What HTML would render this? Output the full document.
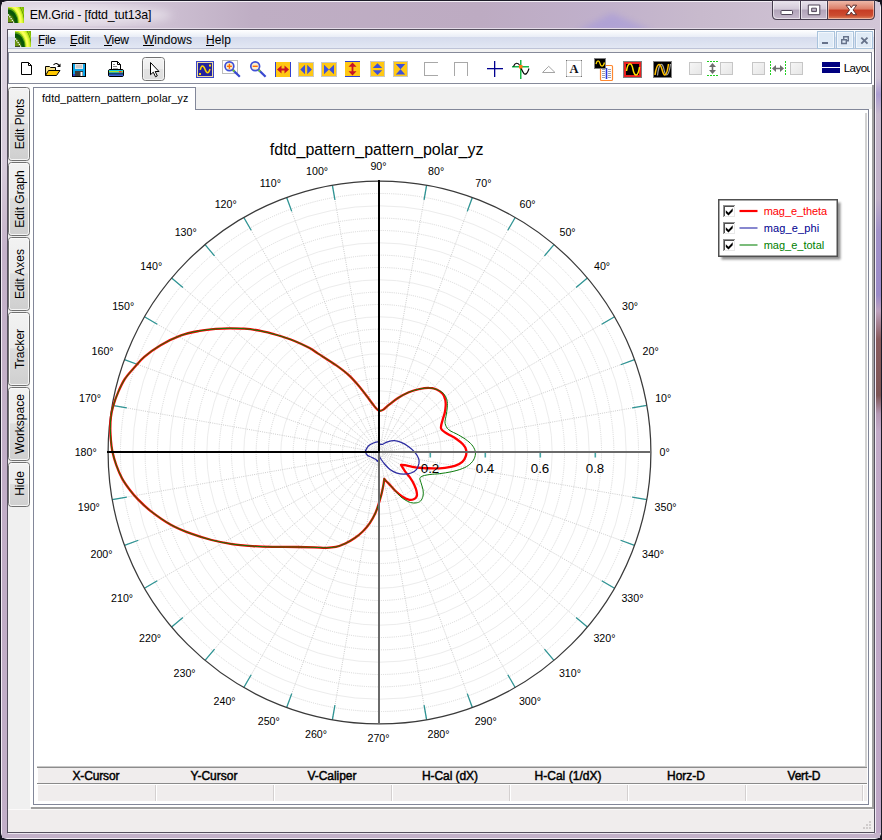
<!DOCTYPE html>
<html><head><meta charset="utf-8"><title>EM.Grid - [fdtd_tut13a]</title>
<style>
html,body{margin:0;padding:0;background:#14141e;overflow:hidden}
svg{display:block;font-family:"Liberation Sans",sans-serif}
.ce{shape-rendering:crispEdges}
</style></head><body>
<svg width="882" height="840" viewBox="0 0 882 840">
<defs>
<linearGradient id="gTitle" x1="0" x2="1" y1="0" y2="0">
<stop offset="0" stop-color="#e0d8e4"/><stop offset="0.07" stop-color="#dcd3e0"/><stop offset="0.17" stop-color="#cfc2d4"/><stop offset="0.285" stop-color="#bfaec4"/><stop offset="0.545" stop-color="#bdabc2"/><stop offset="0.68" stop-color="#c0b0cb"/><stop offset="0.795" stop-color="#c8bacd"/><stop offset="1" stop-color="#d2c6d7"/>
</linearGradient>
<linearGradient id="gSide" x1="0" x2="0" y1="0" y2="1">
<stop offset="0" stop-color="#e0d8e4"/><stop offset="0.2" stop-color="#d6cbda"/><stop offset="0.3" stop-color="#c4b2c9"/><stop offset="0.7" stop-color="#c0acc6"/><stop offset="1" stop-color="#c2afc8"/>
</linearGradient>
<linearGradient id="gSideR" x1="0" x2="0" y1="0" y2="1">
<stop offset="0" stop-color="#d8cedc"/><stop offset="0.06" stop-color="#cfc3d6"/><stop offset="0.08" stop-color="#ab9cd0"/><stop offset="0.105" stop-color="#c6b8cc"/><stop offset="0.21" stop-color="#c0b0c8"/><stop offset="0.25" stop-color="#a292c8"/><stop offset="0.33" stop-color="#9a8ac8"/><stop offset="0.35" stop-color="#bea2be"/><stop offset="0.385" stop-color="#8a5c5e"/><stop offset="0.455" stop-color="#7e5656"/><stop offset="0.478" stop-color="#b498b4"/><stop offset="0.5" stop-color="#c2aac8"/><stop offset="1" stop-color="#bea6c6"/>
</linearGradient>
<linearGradient id="gMenu" x1="0" x2="0" y1="0" y2="1">
<stop offset="0" stop-color="#ffffff"/><stop offset="0.38" stop-color="#e9edf6"/><stop offset="0.39" stop-color="#d5dbed"/><stop offset="1" stop-color="#e2e7f3"/>
</linearGradient>
<linearGradient id="gBtn" x1="0" x2="0" y1="0" y2="1">
<stop offset="0" stop-color="#f2f2f2"/><stop offset="0.48" stop-color="#ebebeb"/><stop offset="0.5" stop-color="#dddddd"/><stop offset="1" stop-color="#cfcfcf"/>
</linearGradient>
<linearGradient id="gBtnSel" x1="0" x2="0" y1="0" y2="1">
<stop offset="0" stop-color="#f4f4f4"/><stop offset="0.5" stop-color="#ececec"/><stop offset="0.52" stop-color="#e2e2e2"/><stop offset="1" stop-color="#dedede"/>
</linearGradient>
<linearGradient id="gCap" x1="0" x2="0" y1="0" y2="1">
<stop offset="0" stop-color="#e9e3ec"/><stop offset="0.45" stop-color="#d3c9d8"/><stop offset="0.5" stop-color="#b2a4ba"/><stop offset="1" stop-color="#c6b9cc"/>
</linearGradient>
<linearGradient id="gClose" x1="0" x2="0" y1="0" y2="1">
<stop offset="0" stop-color="#eeb8a8"/><stop offset="0.45" stop-color="#dc7c66"/><stop offset="0.5" stop-color="#c63c24"/><stop offset="0.8" stop-color="#cc4c30"/><stop offset="1" stop-color="#dc8460"/>
</linearGradient>
<linearGradient id="gDis" x1="0" x2="1" y1="0" y2="1">
<stop offset="0" stop-color="#f6f6f6"/><stop offset="1" stop-color="#e6e6e6"/>
</linearGradient>
<clipPath id="icoClip"><rect x="0" y="0" width="16" height="16"/></clipPath>
<g id="appico" clip-path="url(#icoClip)">
<rect x="0" y="0" width="16" height="16" fill="#7cbc00"/>
<ellipse cx="0" cy="16" rx="17.400" ry="25.200" fill="#a4d410"/>
<ellipse cx="0" cy="16" rx="16.600" ry="24" fill="#5c9000"/>
<ellipse cx="0" cy="16" rx="16" ry="23.100" fill="#bce81c"/>
<ellipse cx="0" cy="16" rx="14.800" ry="21.400" fill="#e4fa3c"/>
<ellipse cx="0" cy="16" rx="13.600" ry="19.600" fill="#fbff5c"/>
<ellipse cx="0" cy="16" rx="11.600" ry="16.800" fill="#d4f030"/>
<ellipse cx="0" cy="16" rx="10.600" ry="15.200" fill="#62ac14"/>
<ellipse cx="0" cy="16" rx="9.800" ry="13.600" fill="#0a560a"/>
<ellipse cx="0" cy="16" rx="7.600" ry="10.600" fill="#125e08"/>
<ellipse cx="0" cy="16" rx="6.400" ry="9.100" fill="#4a7a08"/>
<ellipse cx="0" cy="16" rx="4.600" ry="6.400" fill="#6a9410"/>
<path d="M0.200 7.400 L6 15.600" stroke="#fff" stroke-width="1.2" stroke-dasharray="1.4 0.8"/>
<rect x="0" y="15" width="5" height="1" fill="#3c4a2c"/>
</g>
<filter id="blur1"><feGaussianBlur stdDeviation="0.9"/></filter>
<filter id="glow"><feGaussianBlur stdDeviation="4"/></filter>
<filter id="glow2" x="-30%" y="-50%" width="160%" height="200%"><feGaussianBlur stdDeviation="3"/></filter>
<clipPath id="titleClip"><rect x="2" y="2" width="878" height="27"/></clipPath>
<clipPath id="tbClip"><rect x="9" y="53" width="861" height="30"/></clipPath>
</defs>

<rect x="0" y="0" width="882" height="840" rx="7" ry="7" fill="#1b1b26"/>
<rect x="1" y="1" width="880" height="838" rx="6" ry="6" fill="#f3eef5"/>
<rect x="2" y="2" width="878" height="836" rx="5" ry="5" fill="url(#gSide)"/>
<rect x="2" y="2" width="878" height="28" fill="url(#gTitle)" />
<rect x="875" y="30" width="6" height="803" fill="url(#gSideR)" />
<rect x="875" y="30" width="1" height="803" fill="#efe9f3" />
<rect x="1" y="30" width="1" height="803" fill="#f1ecf3" />
<rect x="2" y="833" width="878" height="5" fill="#c3b1c9" />
<rect x="8" y="833" width="866" height="1" fill="#ece6ef" />
<g clip-path="url(#titleClip)"><path d="M575 32 L612 13 L655 32 Z" fill="#9c90e0" opacity="0.45" filter="url(#glow2)"/></g>
<rect x="8" y="28" width="866" height="1" fill="#e4dce8" />
<ellipse cx="92" cy="15" rx="80" ry="9" fill="#fff" opacity="0.45" filter="url(#glow)"/>
<rect x="7" y="29" width="868" height="804" fill="#55505e" class="ce"/>
<rect x="8" y="30" width="866" height="802" fill="#f0f0f0" class="ce"/>
<use href="#appico" x="8" y="7"/>
<text x="29.7" y="18.9" font-size="12.4" fill="#000" text-anchor="start" font-weight="normal" textLength="121.8" lengthAdjust="spacing" >EM.Grid - [fdtd_tut13a]</text>
<path d="M772 0 V15 Q772 20 777 20 H870 Q875 20 875 15 V0 Z" fill="#463c4e"/>
<path d="M773 1 V15 Q773 19 777 19 H800 V1 Z" fill="url(#gCap)"/>
<path d="M773.500 1 V15 Q773.500 18.500 777 18.500 H799.500 V1" fill="none" stroke="#fff" stroke-opacity="0.55"/>
<rect x="801" y="1" width="26" height="18" fill="url(#gCap)"/>
<path d="M801.500 1 V18.500 H826.500 V1" fill="none" stroke="#fff" stroke-opacity="0.55"/>
<path d="M828 1 V19 H870 Q874 19 874 15 V1 Z" fill="url(#gClose)"/>
<path d="M828.500 1 V18.500 H870 Q873.500 18.500 873.500 15 V1" fill="none" stroke="#ffd8cc" stroke-opacity="0.6"/>
<rect x="781" y="10.500" width="11.500" height="4" rx="0.8" fill="#fff" stroke="#4e4456" stroke-width="1"/>
<path d="M808.300 5 H819.800 V14.700 H808.300 Z M811.700 8.200 V11.600 H816.400 V8.200 Z" fill="#fff" fill-rule="evenodd" stroke="#4e4456" stroke-width="1"/>
<path d="M846 5.200 h3.600 l1.700 2.600 l1.700 -2.600 h3.600 l-3.500 4.700 l3.500 4.800 h-3.600 l-1.700 -2.600 l-1.700 2.600 h-3.600 l3.500 -4.800 z" fill="#fff" stroke="#5c3030" stroke-width="1"/>
<rect x="8" y="30" width="866" height="18" fill="url(#gMenu)" class="ce"/>
<rect x="8" y="48" width="866" height="1" fill="#bec3d7" />
<rect x="8" y="49" width="866" height="3" fill="#f2f2f2" class="ce"/>
<use href="#appico" x="15" y="31"/>
<text x="38" y="43.5" font-size="12" fill="#000" text-anchor="start" font-weight="normal" textLength="18" lengthAdjust="spacing" >File</text>
<text x="70" y="43.5" font-size="12" fill="#000" text-anchor="start" font-weight="normal" textLength="20" lengthAdjust="spacing" >Edit</text>
<text x="104" y="43.5" font-size="12" fill="#000" text-anchor="start" font-weight="normal" textLength="25" lengthAdjust="spacing" >View</text>
<text x="143" y="43.5" font-size="12" fill="#000" text-anchor="start" font-weight="normal" textLength="49" lengthAdjust="spacing" >Windows</text>
<text x="206" y="43.5" font-size="12" fill="#000" text-anchor="start" font-weight="normal" textLength="25" lengthAdjust="spacing" >Help</text>
<rect x="38" y="45" width="6" height="1" fill="#000" />
<rect x="70" y="45" width="6" height="1" fill="#000" />
<rect x="104" y="45" width="8" height="1" fill="#000" />
<rect x="143" y="45" width="11" height="1" fill="#000" />
<rect x="206" y="45" width="8" height="1" fill="#000" />
<rect x="817.5" y="31.5" width="17" height="17" fill="#dfeaf6" stroke="#a9c3dc" class="ce"/>
<rect x="818.5" y="32.5" width="15" height="15" fill="none" stroke="#f2f7fc" class="ce"/>
<rect x="836.5" y="31.5" width="17" height="17" fill="#dfeaf6" stroke="#a9c3dc" class="ce"/>
<rect x="837.5" y="32.5" width="15" height="15" fill="none" stroke="#f2f7fc" class="ce"/>
<rect x="855.5" y="31.5" width="17" height="17" fill="#dfeaf6" stroke="#a9c3dc" class="ce"/>
<rect x="856.5" y="32.5" width="15" height="15" fill="none" stroke="#f2f7fc" class="ce"/>
<rect x="822" y="42" width="6" height="2" fill="#66728a" class="ce"/>
<path d="M841.700 39.700 h4.600 v3.800 h-4.600 z M843.700 39 v-2.200 h4.600 v4 h-1.600" fill="none" stroke="#66728a" stroke-width="1.4"/>
<path d="M861.300 37.600 l6.200 6 M867.500 37.600 l-6.200 6" stroke="#66728a" stroke-width="1.9"/>
<rect x="8" y="52" width="864" height="32" fill="#868a9a" class="ce"/>
<rect x="9" y="53" width="862" height="30" fill="#ffffff" class="ce"/>
<rect x="872" y="52" width="2" height="35" fill="#ffffff" class="ce"/>
<rect x="8" y="84" width="866" height="3" fill="#ffffff" class="ce"/>
<g clip-path="url(#tbClip)">
<path d="M21.5 62.5 H28.5 L31.5 65.5 V74.5 H21.5 Z" fill="#fff" stroke="#000" stroke-width="1"/>
<path d="M28.5 62.5 V65.5 H31.5" fill="none" stroke="#000" stroke-width="1"/>
<path d="M45.5 75.500 V66.5 H49.5 L50.5 67.5 H55.5 V70" fill="#f4e08c" stroke="#000" stroke-width="1"/>
<path d="M45.500 75.5 L48.5 70.5 H60 L56.5 75.5 Z" fill="#ffc800" stroke="#000" stroke-width="1" stroke-linejoin="round"/>
<path d="M53.5 65 Q56.5 61.500 59.500 66" fill="none" stroke="#000" stroke-width="1.1"/>
<path d="M60.500 63.500 V67 H57 Z" fill="#000"/>
<rect x="72.5" y="63.5" width="13" height="13" fill="#0aa4e8" stroke="#000" stroke-width="1"/>
<rect x="75" y="64" width="8" height="5" fill="#e4e4e4" />
<rect x="76" y="65" width="6" height="3" fill="#c8c8c8" />
<rect x="75" y="71" width="8" height="5" fill="#3c3c3c" />
<rect x="80.5" y="72" width="2" height="4" fill="#ffffff" />
<rect x="73" y="74" width="2" height="2" fill="#3040d0" />
<path d="M111.5 69.500 V61.500 H117.5 L120.500 64.500 V69.5 Z" fill="#fff" stroke="#000" stroke-width="1"/>
<path d="M117.5 61.500 V64.500 H120.5" fill="none" stroke="#000" stroke-width="1"/>
<rect x="113" y="64" width="2" height="1" fill="#888" />
<rect x="113" y="66" width="4" height="1" fill="#888" />
<rect x="113" y="68" width="5" height="1" fill="#aaa" />
<rect x="108.5" y="69.5" width="15" height="7" rx="1.5" fill="#1c4fc0" stroke="#000" stroke-width="1"/>
<rect x="109" y="70" width="14" height="1" fill="#10c8e0" />
<rect x="109" y="71" width="14" height="1.5" fill="#a8e030" />
<rect x="109" y="72.5" width="14" height="1" fill="#10c0d8" />
<rect x="109" y="73.5" width="14" height="1" fill="#101010" />
<rect x="109" y="74.5" width="14" height="1.5" fill="#3c64d8" />
<rect x="119" y="71" width="2.5" height="1.5" fill="#ff3020" />
<rect x="142.5" y="57.5" width="22" height="23" rx="3" fill="url(#gBtnSel)" stroke="#727272"/>
<rect x="143.5" y="58.5" width="20" height="21" rx="2" fill="none" stroke="#fbfbfb" stroke-opacity="0.7"/>
<path d="M150.5 62.500 V74.700 L153.300 72.200 L155.500 76.800 L157.300 75.900 L155.200 71.500 H159 Z" fill="#fff" stroke="#000" stroke-width="1" stroke-linejoin="miter"/>
<rect x="196" y="61" width="18" height="17" fill="#3c48c8" class="ce"/>
<rect x="197" y="62" width="16" height="15" fill="#ecdca0" class="ce"/>
<rect x="198" y="63" width="14" height="13" fill="#2424a0" class="ce"/>
<path d="M200.300 69.800 C201.300 65 203.300 64.800 205 69.300 S208.600 74 210 69" fill="none" stroke="#ffd800" stroke-width="1.5"/>
<rect x="209" y="64.5" width="2" height="2" fill="#ffd800" />
<rect x="199" y="73" width="2" height="2" fill="#ffd800" />
<rect x="222.5" y="60.5" width="15" height="13" fill="#fff" stroke="#bdbdbd" class="ce"/>
<line x1="232.8" y1="69.900" x2="239.8" y2="76.800" stroke="#3848d0" stroke-width="2.2"/>
<line x1="232.6" y1="69.700" x2="234.4" y2="71.500" stroke="#70c830" stroke-width="1.9"/>
<circle cx="229.4" cy="66.3" r="4.4" fill="#fbeecb" stroke="#4050d8" stroke-width="1.7"/>
<rect x="226.9" y="65.6" width="5" height="1.4" fill="#ff6a00"/>
<rect x="228.70000000000002" y="63.800" width="1.4" height="5" fill="#ff6a00"/>
<line x1="258.59999999999997" y1="69.900" x2="265.59999999999997" y2="76.800" stroke="#3848d0" stroke-width="2.2"/>
<line x1="258.4" y1="69.700" x2="260.2" y2="71.500" stroke="#70c830" stroke-width="1.9"/>
<circle cx="255.2" cy="66.3" r="4.4" fill="#fbeecb" stroke="#4050d8" stroke-width="1.7"/>
<rect x="252.7" y="65.6" width="5" height="1.4" fill="#ff6a00"/>
<rect x="275" y="62" width="16" height="15" fill="#ffc814" class="ce"/>
<rect x="275" y="62" width="1" height="15" fill="#3040d0" class="ce"/>
<rect x="290" y="62" width="1" height="15" fill="#3040d0" class="ce"/>
<path d="M277 69.500 L281.500 65.500 V68.600 H284.500 V65.500 L289 69.500 L284.500 73.500 V70.400 H281.500 V73.500 Z" fill="#c81424"/>
<rect x="298.5" y="62.5" width="15" height="14" fill="#ffc814" stroke="#c8c8c8" class="ce"/>
<path d="M300.300 69.500 L305 64.800 V74.200 Z M311.900 69.500 L307.200 64.800 V74.200 Z" fill="#3c50dc"/>
<rect x="321.5" y="62.5" width="15" height="14" fill="#ffc814" stroke="#c8c8c8" class="ce"/>
<path d="M324 64.800 L329 69.500 L324 74.200 Z M334 64.800 L329 69.500 L334 74.200 Z" fill="#3c50dc"/>
<rect x="345" y="61" width="15" height="16" fill="#ffc814" class="ce"/>
<rect x="345" y="61" width="15" height="1" fill="#3040d0" class="ce"/>
<rect x="345" y="76" width="15" height="1" fill="#3040d0" class="ce"/>
<path d="M352.500 62.500 L356.500 66.800 H353.400 V71.200 H356.500 L352.500 75.500 L348.500 71.200 H351.600 V66.800 H348.500 Z" fill="#c81424"/>
<rect x="370.5" y="61.5" width="14" height="15" fill="#ffc814" stroke="#c8c8c8" class="ce"/>
<path d="M377.500 63.300 L382.200 68 H372.800 Z M377.500 75 L382.200 70.300 H372.800 Z" fill="#3c50dc"/>
<rect x="393.5" y="61.5" width="14" height="15" fill="#ffc814" stroke="#c8c8c8" class="ce"/>
<path d="M395.800 64 H405.200 L400.500 69.200 Z M395.800 74.500 H405.200 L400.500 69.200 Z" fill="#3c50dc"/>
<path d="M437.500 62.500 H424.500 V75.500 H437.500" fill="none" stroke="#a8a8a8" class="ce"/>
<path d="M454.500 75.500 V62.500 H467.500 V75.500" fill="none" stroke="#a8a8a8" class="ce"/>
<rect x="487" y="68" width="16" height="1.3" fill="#000090" />
<rect x="494" y="61" width="1.3" height="16" fill="#000090" />
<rect x="520" y="60" width="1.5" height="19" fill="#18b848" />
<rect x="512" y="66" width="17" height="1.5" fill="#18b848" />
<path d="M513.500 66.500 C515 62.500 518 62 520 66 C522.500 71 524 76 526.500 73.500 C528 72 528.500 70 529 68.500" fill="none" stroke="#000" stroke-width="1.2"/>
<rect x="519" y="65" width="3.5" height="3.5" fill="#ff7a10" />
<path d="M542.500 72.500 L548.700 66.300 L555 72.500 Z" fill="none" stroke="#a4a4a4" stroke-width="1"/>
<rect x="566.5" y="60.5" width="15" height="16" fill="#fff" stroke="#c4c4c4" class="ce"/>
<rect x="566" y="60" width="1" height="1" fill="#707070" />
<rect x="581" y="60" width="1" height="1" fill="#707070" />
<rect x="566" y="76" width="1" height="1" fill="#707070" />
<rect x="581" y="76" width="1" height="1" fill="#707070" />
<text x="574" y="72.800" font-family="Liberation Serif, serif" font-weight="bold" font-size="12.5" text-anchor="middle" fill="#101018">A</text>
<rect x="600.5" y="65.500" width="12" height="15" rx="1" fill="#fff" stroke="#ff8830" stroke-width="1.2"/>
<rect x="602" y="69" width="3" height="1" fill="#9aa0b0" />
<rect x="608" y="69" width="3" height="1" fill="#9aa0b0" />
<rect x="602" y="71" width="3" height="1" fill="#9aa0b0" />
<rect x="608" y="71" width="3" height="1" fill="#9aa0b0" />
<rect x="602" y="73" width="3" height="1" fill="#9aa0b0" />
<rect x="608" y="73" width="3" height="1" fill="#9aa0b0" />
<rect x="602" y="75" width="3" height="1" fill="#9aa0b0" />
<rect x="608" y="75" width="3" height="1" fill="#9aa0b0" />
<rect x="602" y="77" width="3" height="1" fill="#9aa0b0" />
<rect x="608" y="77" width="3" height="1" fill="#9aa0b0" />
<rect x="605.7" y="68" width="1.6" height="11" fill="#2838e0" />
<rect x="594.5" y="58.5" width="11" height="10" fill="#000" stroke="#808080" class="ce"/>
<path d="M596 64 C597 60 599 60 600 63.500 S603 67.500 604.500 62.500" fill="none" stroke="#ffd800" stroke-width="1.3"/>
<rect x="623.5" y="61.5" width="18" height="16" fill="#000" stroke="#808080" class="ce"/>
<rect x="625" y="63" width="15" height="13" fill="none" stroke="#e82020" stroke-width="1.2" class="ce"/>
<path d="M626.500 71 C628 61.500 631.500 62 633 69.500 S638 77.500 639.500 67" fill="none" stroke="#ffe000" stroke-width="1.5"/>
<rect x="653.5" y="61.5" width="18" height="16" fill="#000" stroke="#808080" class="ce"/>
<path d="M657.500 75.500 C659 62 662.500 62 664 69.500 S668.500 78 670.500 64" fill="none" stroke="#a0a0a0" stroke-width="1.2"/>
<path d="M655 75 C657 62 660 62 662 69.500 S666.500 78 668.500 64" fill="none" stroke="#ffc000" stroke-width="1.5"/>
<rect x="689.5" y="62.5" width="12" height="12" fill="url(#gDis)" stroke="#c6c6c6" class="ce"/>
<rect x="720.5" y="62.5" width="12" height="12" fill="url(#gDis)" stroke="#c6c6c6" class="ce"/>
<rect x="752.5" y="62.5" width="12" height="12" fill="url(#gDis)" stroke="#c6c6c6" class="ce"/>
<rect x="790.5" y="62.5" width="12" height="12" fill="url(#gDis)" stroke="#c6c6c6" class="ce"/>
<path d="M707 61.500 H718 M707 75.500 H718" stroke="#20d020" stroke-width="1" stroke-dasharray="2 1" class="ce"/>
<path d="M712.500 63 L716 67 H713.300 V70 H716 L712.500 74 L709 70 H711.700 V67 H709 Z" fill="#6e6e6e"/>
<path d="M770.500 61 V75 M785.500 61 V75" stroke="#20d020" stroke-width="1" stroke-dasharray="2 1" class="ce"/>
<path d="M772 68.500 L776 65 V67.700 H780 V65 L784 68.500 L780 72 V69.300 H776 V72 Z" fill="#6e6e6e"/>
<rect x="822" y="62" width="18" height="5" fill="#000080" class="ce"/>
<rect x="822" y="68" width="18" height="5" fill="#000080" class="ce"/>
<text x="843.7" y="71.8" font-size="11.5" fill="#000" text-anchor="start" font-weight="normal" textLength="32" lengthAdjust="spacing" >Layout</text>
</g>
<rect x="8" y="87" width="22" height="722" fill="#f0f0f0" class="ce"/>
<rect x="30" y="84" width="842" height="723" fill="#ffffff" class="ce"/>
<rect x="196" y="87" width="676" height="22" fill="#f0f0f0" class="ce"/>
<rect x="872" y="85" width="2" height="724" fill="#a0a0a0" class="ce"/>
<rect x="31" y="807" width="843" height="2" fill="#a0a0a0" class="ce"/>
<rect x="33" y="87" width="1" height="718" fill="#828799" />
<rect x="33" y="87" width="163" height="1" fill="#828799" />
<rect x="195" y="87" width="1" height="23" fill="#828799" />
<rect x="195" y="109" width="674" height="1" fill="#828799" />
<rect x="868" y="109" width="1" height="696" fill="#828799" />
<rect x="33" y="804" width="836" height="1" fill="#828799" />
<text x="42" y="101.5" font-size="10.67" fill="#000" text-anchor="start" font-weight="normal" textLength="146.3" lengthAdjust="spacing" >fdtd_pattern_pattern_polar_yz</text>
<rect x="865" y="113" width="2" height="653" fill="#d2d2d2" class="ce"/>
<rect x="8.5" y="87.5" width="21" height="73" rx="3" fill="url(#gBtn)" stroke="#707070"/>
<rect x="9.5" y="88.5" width="19" height="71" rx="2" fill="none" stroke="#fcfcfc" stroke-opacity="0.85"/>
<text transform="translate(24,124.0) rotate(-90)" font-size="12" text-anchor="middle" fill="#000">Edit Plots</text>
<rect x="8.5" y="162.5" width="21" height="73" rx="3" fill="url(#gBtn)" stroke="#707070"/>
<rect x="9.5" y="163.5" width="19" height="71" rx="2" fill="none" stroke="#fcfcfc" stroke-opacity="0.85"/>
<text transform="translate(24,199.0) rotate(-90)" font-size="12" text-anchor="middle" fill="#000">Edit Graph</text>
<rect x="8.5" y="237.5" width="21" height="73" rx="3" fill="url(#gBtn)" stroke="#707070"/>
<rect x="9.5" y="238.5" width="19" height="71" rx="2" fill="none" stroke="#fcfcfc" stroke-opacity="0.85"/>
<text transform="translate(24,274.0) rotate(-90)" font-size="12" text-anchor="middle" fill="#000">Edit Axes</text>
<rect x="8.5" y="312.5" width="21" height="73" rx="3" fill="url(#gBtn)" stroke="#707070"/>
<rect x="9.5" y="313.5" width="19" height="71" rx="2" fill="none" stroke="#fcfcfc" stroke-opacity="0.85"/>
<text transform="translate(24,349.0) rotate(-90)" font-size="12" text-anchor="middle" fill="#000">Tracker</text>
<rect x="8.5" y="387.5" width="21" height="73" rx="3" fill="url(#gBtn)" stroke="#707070"/>
<rect x="9.5" y="388.5" width="19" height="71" rx="2" fill="none" stroke="#fcfcfc" stroke-opacity="0.85"/>
<text transform="translate(24,424.0) rotate(-90)" font-size="12" text-anchor="middle" fill="#000">Workspace</text>
<rect x="8.5" y="462.5" width="21" height="44" rx="3" fill="url(#gBtn)" stroke="#707070"/>
<rect x="9.5" y="463.5" width="19" height="42" rx="2" fill="none" stroke="#fcfcfc" stroke-opacity="0.85"/>
<text transform="translate(24,483.5) rotate(-90)" font-size="12" text-anchor="middle" fill="#000">Hide</text>
<rect x="37" y="766" width="830" height="1" fill="#c8c8c8" />
<rect x="37" y="767" width="830" height="1" fill="#8c8c8c" />
<rect x="38" y="768" width="829" height="15" fill="#f0eded" class="ce"/>
<rect x="37" y="783" width="830" height="1" fill="#8a8a8a" />
<rect x="38" y="785" width="829" height="16" fill="#f0eded" class="ce"/>
<text x="96" y="779.5" font-size="12" fill="#000" text-anchor="middle" font-weight="normal" textLength="47" lengthAdjust="spacing" stroke="#000" stroke-width="0.45">X-Cursor</text>
<rect x="155" y="785" width="1" height="16" fill="#d4d0d0" />
<rect x="156" y="785" width="1" height="16" fill="#ffffff" />
<text x="214" y="779.5" font-size="12" fill="#000" text-anchor="middle" font-weight="normal" textLength="47" lengthAdjust="spacing" stroke="#000" stroke-width="0.45">Y-Cursor</text>
<rect x="273" y="785" width="1" height="16" fill="#d4d0d0" />
<rect x="274" y="785" width="1" height="16" fill="#ffffff" />
<text x="332" y="779.5" font-size="12" fill="#000" text-anchor="middle" font-weight="normal" textLength="49" lengthAdjust="spacing" stroke="#000" stroke-width="0.45">V-Caliper</text>
<rect x="391" y="785" width="1" height="16" fill="#d4d0d0" />
<rect x="392" y="785" width="1" height="16" fill="#ffffff" />
<text x="450" y="779.5" font-size="12" fill="#000" text-anchor="middle" font-weight="normal" textLength="56" lengthAdjust="spacing" stroke="#000" stroke-width="0.45">H-Cal (dX)</text>
<rect x="509" y="785" width="1" height="16" fill="#d4d0d0" />
<rect x="510" y="785" width="1" height="16" fill="#ffffff" />
<text x="568" y="779.5" font-size="12" fill="#000" text-anchor="middle" font-weight="normal" textLength="67" lengthAdjust="spacing" stroke="#000" stroke-width="0.45">H-Cal (1/dX)</text>
<rect x="627" y="785" width="1" height="16" fill="#d4d0d0" />
<rect x="628" y="785" width="1" height="16" fill="#ffffff" />
<text x="686" y="779.5" font-size="12" fill="#000" text-anchor="middle" font-weight="normal" textLength="38" lengthAdjust="spacing" stroke="#000" stroke-width="0.45">Horz-D</text>
<rect x="745" y="785" width="1" height="16" fill="#d4d0d0" />
<rect x="746" y="785" width="1" height="16" fill="#ffffff" />
<text x="804" y="779.5" font-size="12" fill="#000" text-anchor="middle" font-weight="normal" textLength="33" lengthAdjust="spacing" stroke="#000" stroke-width="0.45">Vert-D</text>
<rect x="862" y="785" width="1" height="16" fill="#d4d0d0" />
<rect x="863" y="785" width="1" height="16" fill="#ffffff" />
<rect x="8" y="809" width="866" height="23" fill="#f0eded" class="ce"/>
<rect x="8" y="809" width="866" height="1" fill="#fbfafa" />
<rect x="869" y="827" width="2" height="2" fill="#d0cccc" class="ce"/>
<rect x="866" y="827" width="2" height="2" fill="#d0cccc" class="ce"/>
<rect x="863" y="827" width="2" height="2" fill="#d0cccc" class="ce"/>
<rect x="869" y="824" width="2" height="2" fill="#d0cccc" class="ce"/>
<rect x="866" y="824" width="2" height="2" fill="#d0cccc" class="ce"/>
<rect x="869" y="821" width="2" height="2" fill="#d0cccc" class="ce"/>
<g fill="none">
<circle cx="379.5" cy="452.5" r="12.34" stroke="#d6d6d6" stroke-width="1" stroke-dasharray="1 1.15"/>
<circle cx="379.5" cy="452.5" r="24.67" stroke="#ececec" stroke-width="1"/>
<circle cx="379.5" cy="452.5" r="37.01" stroke="#d6d6d6" stroke-width="1" stroke-dasharray="1 1.15"/>
<circle cx="379.5" cy="452.5" r="49.34" stroke="#d6d6d6" stroke-width="1" stroke-dasharray="1 1.15"/>
<circle cx="379.5" cy="452.5" r="61.68" stroke="#ececec" stroke-width="1"/>
<circle cx="379.5" cy="452.5" r="74.01" stroke="#d6d6d6" stroke-width="1" stroke-dasharray="1 1.15"/>
<circle cx="379.5" cy="452.5" r="86.34" stroke="#d6d6d6" stroke-width="1" stroke-dasharray="1 1.15"/>
<circle cx="379.5" cy="452.5" r="98.68" stroke="#ececec" stroke-width="1"/>
<circle cx="379.5" cy="452.5" r="111.02" stroke="#d6d6d6" stroke-width="1" stroke-dasharray="1 1.15"/>
<circle cx="379.5" cy="452.5" r="123.35" stroke="#d6d6d6" stroke-width="1" stroke-dasharray="1 1.15"/>
<circle cx="379.5" cy="452.5" r="135.69" stroke="#ececec" stroke-width="1"/>
<circle cx="379.5" cy="452.5" r="148.02" stroke="#d6d6d6" stroke-width="1" stroke-dasharray="1 1.15"/>
<circle cx="379.5" cy="452.5" r="160.36" stroke="#d6d6d6" stroke-width="1" stroke-dasharray="1 1.15"/>
<circle cx="379.5" cy="452.5" r="172.69" stroke="#ececec" stroke-width="1"/>
<circle cx="379.5" cy="452.5" r="185.03" stroke="#d6d6d6" stroke-width="1" stroke-dasharray="1 1.15"/>
<circle cx="379.5" cy="452.5" r="197.36" stroke="#d6d6d6" stroke-width="1" stroke-dasharray="1 1.15"/>
<circle cx="379.5" cy="452.5" r="209.70" stroke="#ececec" stroke-width="1"/>
<circle cx="379.5" cy="452.5" r="222.03" stroke="#d6d6d6" stroke-width="1" stroke-dasharray="1 1.15"/>
<circle cx="379.5" cy="452.5" r="234.37" stroke="#d6d6d6" stroke-width="1" stroke-dasharray="1 1.15"/>
<circle cx="379.5" cy="452.5" r="246.70" stroke="#ececec" stroke-width="1"/>
<circle cx="379.5" cy="452.5" r="259.04" stroke="#d6d6d6" stroke-width="1" stroke-dasharray="1 1.15"/>
<line x1="382.45" y1="451.98" x2="646.78" y2="405.37" stroke="#cecece" stroke-width="1" stroke-dasharray="1 1.2" stroke-dashoffset="1.50"/>
<line x1="382.32" y1="451.47" x2="634.53" y2="359.68" stroke="#cecece" stroke-width="1" stroke-dasharray="1 1.2" stroke-dashoffset="0.80"/>
<line x1="382.10" y1="451.00" x2="614.54" y2="316.80" stroke="#cecece" stroke-width="1" stroke-dasharray="1 1.2" stroke-dashoffset="0.10"/>
<line x1="381.80" y1="450.57" x2="587.40" y2="278.05" stroke="#cecece" stroke-width="1" stroke-dasharray="1 1.2" stroke-dashoffset="1.60"/>
<line x1="381.43" y1="450.20" x2="553.95" y2="244.60" stroke="#cecece" stroke-width="1" stroke-dasharray="1 1.2" stroke-dashoffset="0.90"/>
<line x1="381.00" y1="449.90" x2="515.20" y2="217.46" stroke="#cecece" stroke-width="1" stroke-dasharray="1 1.2" stroke-dashoffset="0.20"/>
<line x1="380.53" y1="449.68" x2="472.32" y2="197.47" stroke="#cecece" stroke-width="1" stroke-dasharray="1 1.2" stroke-dashoffset="1.70"/>
<line x1="380.02" y1="449.55" x2="426.63" y2="185.22" stroke="#cecece" stroke-width="1" stroke-dasharray="1 1.2" stroke-dashoffset="1.00"/>
<line x1="378.98" y1="449.55" x2="332.37" y2="185.22" stroke="#cecece" stroke-width="1" stroke-dasharray="1 1.2" stroke-dashoffset="1.80"/>
<line x1="378.47" y1="449.68" x2="286.68" y2="197.47" stroke="#cecece" stroke-width="1" stroke-dasharray="1 1.2" stroke-dashoffset="1.10"/>
<line x1="378.00" y1="449.90" x2="243.80" y2="217.46" stroke="#cecece" stroke-width="1" stroke-dasharray="1 1.2" stroke-dashoffset="0.40"/>
<line x1="377.57" y1="450.20" x2="205.05" y2="244.60" stroke="#cecece" stroke-width="1" stroke-dasharray="1 1.2" stroke-dashoffset="1.90"/>
<line x1="377.20" y1="450.57" x2="171.60" y2="278.05" stroke="#cecece" stroke-width="1" stroke-dasharray="1 1.2" stroke-dashoffset="1.20"/>
<line x1="376.90" y1="451.00" x2="144.46" y2="316.80" stroke="#cecece" stroke-width="1" stroke-dasharray="1 1.2" stroke-dashoffset="0.50"/>
<line x1="376.68" y1="451.47" x2="124.47" y2="359.68" stroke="#cecece" stroke-width="1" stroke-dasharray="1 1.2" stroke-dashoffset="2.00"/>
<line x1="376.55" y1="451.98" x2="112.22" y2="405.37" stroke="#cecece" stroke-width="1" stroke-dasharray="1 1.2" stroke-dashoffset="1.30"/>
<line x1="376.55" y1="453.02" x2="112.22" y2="499.63" stroke="#cecece" stroke-width="1" stroke-dasharray="1 1.2" stroke-dashoffset="2.10"/>
<line x1="376.68" y1="453.53" x2="124.47" y2="545.32" stroke="#cecece" stroke-width="1" stroke-dasharray="1 1.2" stroke-dashoffset="1.40"/>
<line x1="376.90" y1="454.00" x2="144.46" y2="588.20" stroke="#cecece" stroke-width="1" stroke-dasharray="1 1.2" stroke-dashoffset="0.70"/>
<line x1="377.20" y1="454.43" x2="171.60" y2="626.95" stroke="#cecece" stroke-width="1" stroke-dasharray="1 1.2" stroke-dashoffset="2.20"/>
<line x1="377.57" y1="454.80" x2="205.05" y2="660.40" stroke="#cecece" stroke-width="1" stroke-dasharray="1 1.2" stroke-dashoffset="1.50"/>
<line x1="378.00" y1="455.10" x2="243.80" y2="687.54" stroke="#cecece" stroke-width="1" stroke-dasharray="1 1.2" stroke-dashoffset="0.80"/>
<line x1="378.47" y1="455.32" x2="286.68" y2="707.53" stroke="#cecece" stroke-width="1" stroke-dasharray="1 1.2" stroke-dashoffset="0.10"/>
<line x1="378.98" y1="455.45" x2="332.37" y2="719.78" stroke="#cecece" stroke-width="1" stroke-dasharray="1 1.2" stroke-dashoffset="1.60"/>
<line x1="380.02" y1="455.45" x2="426.63" y2="719.78" stroke="#cecece" stroke-width="1" stroke-dasharray="1 1.2" stroke-dashoffset="0.20"/>
<line x1="380.53" y1="455.32" x2="472.32" y2="707.53" stroke="#cecece" stroke-width="1" stroke-dasharray="1 1.2" stroke-dashoffset="1.70"/>
<line x1="381.00" y1="455.10" x2="515.20" y2="687.54" stroke="#cecece" stroke-width="1" stroke-dasharray="1 1.2" stroke-dashoffset="1.00"/>
<line x1="381.43" y1="454.80" x2="553.95" y2="660.40" stroke="#cecece" stroke-width="1" stroke-dasharray="1 1.2" stroke-dashoffset="0.30"/>
<line x1="381.80" y1="454.43" x2="587.40" y2="626.95" stroke="#cecece" stroke-width="1" stroke-dasharray="1 1.2" stroke-dashoffset="1.80"/>
<line x1="382.10" y1="454.00" x2="614.54" y2="588.20" stroke="#cecece" stroke-width="1" stroke-dasharray="1 1.2" stroke-dashoffset="1.10"/>
<line x1="382.32" y1="453.53" x2="634.53" y2="545.32" stroke="#cecece" stroke-width="1" stroke-dasharray="1 1.2" stroke-dashoffset="0.40"/>
<line x1="382.45" y1="453.02" x2="646.78" y2="499.63" stroke="#cecece" stroke-width="1" stroke-dasharray="1 1.2" stroke-dashoffset="1.90"/>
<line x1="646.78" y1="405.37" x2="632.20" y2="407.94" stroke="#2e9494" stroke-width="1.3"/>
<line x1="634.53" y1="359.68" x2="620.63" y2="364.74" stroke="#2e9494" stroke-width="1.3"/>
<line x1="614.54" y1="316.80" x2="601.72" y2="324.20" stroke="#2e9494" stroke-width="1.3"/>
<line x1="587.40" y1="278.05" x2="576.07" y2="287.56" stroke="#2e9494" stroke-width="1.3"/>
<line x1="553.95" y1="244.60" x2="544.44" y2="255.93" stroke="#2e9494" stroke-width="1.3"/>
<line x1="515.20" y1="217.46" x2="507.80" y2="230.28" stroke="#2e9494" stroke-width="1.3"/>
<line x1="472.32" y1="197.47" x2="467.26" y2="211.37" stroke="#2e9494" stroke-width="1.3"/>
<line x1="426.63" y1="185.22" x2="424.06" y2="199.80" stroke="#2e9494" stroke-width="1.3"/>
<line x1="332.37" y1="185.22" x2="334.94" y2="199.80" stroke="#2e9494" stroke-width="1.3"/>
<line x1="286.68" y1="197.47" x2="291.74" y2="211.37" stroke="#2e9494" stroke-width="1.3"/>
<line x1="243.80" y1="217.46" x2="251.20" y2="230.28" stroke="#2e9494" stroke-width="1.3"/>
<line x1="205.05" y1="244.60" x2="214.56" y2="255.93" stroke="#2e9494" stroke-width="1.3"/>
<line x1="171.60" y1="278.05" x2="182.93" y2="287.56" stroke="#2e9494" stroke-width="1.3"/>
<line x1="144.46" y1="316.80" x2="157.28" y2="324.20" stroke="#2e9494" stroke-width="1.3"/>
<line x1="124.47" y1="359.68" x2="138.37" y2="364.74" stroke="#2e9494" stroke-width="1.3"/>
<line x1="112.22" y1="405.37" x2="126.80" y2="407.94" stroke="#2e9494" stroke-width="1.3"/>
<line x1="112.22" y1="499.63" x2="126.80" y2="497.06" stroke="#2e9494" stroke-width="1.3"/>
<line x1="124.47" y1="545.32" x2="138.37" y2="540.26" stroke="#2e9494" stroke-width="1.3"/>
<line x1="144.46" y1="588.20" x2="157.28" y2="580.80" stroke="#2e9494" stroke-width="1.3"/>
<line x1="171.60" y1="626.95" x2="182.93" y2="617.44" stroke="#2e9494" stroke-width="1.3"/>
<line x1="205.05" y1="660.40" x2="214.56" y2="649.07" stroke="#2e9494" stroke-width="1.3"/>
<line x1="243.80" y1="687.54" x2="251.20" y2="674.72" stroke="#2e9494" stroke-width="1.3"/>
<line x1="286.68" y1="707.53" x2="291.74" y2="693.63" stroke="#2e9494" stroke-width="1.3"/>
<line x1="332.37" y1="719.78" x2="334.94" y2="705.20" stroke="#2e9494" stroke-width="1.3"/>
<line x1="426.63" y1="719.78" x2="424.06" y2="705.20" stroke="#2e9494" stroke-width="1.3"/>
<line x1="472.32" y1="707.53" x2="467.26" y2="693.63" stroke="#2e9494" stroke-width="1.3"/>
<line x1="515.20" y1="687.54" x2="507.80" y2="674.72" stroke="#2e9494" stroke-width="1.3"/>
<line x1="553.95" y1="660.40" x2="544.44" y2="649.07" stroke="#2e9494" stroke-width="1.3"/>
<line x1="587.40" y1="626.95" x2="576.07" y2="617.44" stroke="#2e9494" stroke-width="1.3"/>
<line x1="614.54" y1="588.20" x2="601.72" y2="580.80" stroke="#2e9494" stroke-width="1.3"/>
<line x1="634.53" y1="545.32" x2="620.63" y2="540.26" stroke="#2e9494" stroke-width="1.3"/>
<line x1="646.78" y1="499.63" x2="632.20" y2="497.06" stroke="#2e9494" stroke-width="1.3"/>
<circle cx="379.5" cy="452.5" r="271.4" stroke="#3a3a3a" stroke-width="1.25"/>
</g>
<path d="M377.3 409.5 C377.7 409.7 378.8 410.9 379.8 410.9 C380.8 410.9 381.9 410.6 383.4 409.6 C384.9 408.6 386.5 406.8 388.9 404.9 C391.3 403.0 394.7 400.1 398.0 398.0 C401.3 395.9 405.2 393.7 408.8 392.2 C412.4 390.7 416.4 389.7 419.7 389.0 C423.0 388.3 426.1 387.8 428.8 387.9 C431.5 387.9 433.8 388.4 436.1 389.3 C438.4 390.2 440.9 391.9 442.4 393.5 C443.9 395.1 444.6 397.0 445.1 399.0 C445.7 401.0 445.8 403.0 445.7 405.3 C445.6 407.6 445.3 410.2 444.8 412.6 C444.3 415.1 443.2 417.3 442.6 420.0 C442.0 422.7 440.3 426.4 441.1 428.7 C441.9 431.0 444.8 432.0 447.3 433.7 C449.8 435.4 453.5 436.9 456.1 438.7 C458.7 440.5 461.2 442.4 462.9 444.3 C464.6 446.2 465.6 447.9 466.1 449.9 C466.6 451.9 466.4 454.2 465.8 456.2 C465.2 458.2 464.1 460.2 462.3 461.8 C460.5 463.4 457.7 464.9 454.8 465.9 C451.9 466.9 448.4 467.4 444.9 467.8 C441.4 468.2 437.4 468.4 433.6 468.4 C429.9 468.4 425.9 468.3 422.4 468.0 C418.9 467.7 415.3 467.3 412.4 466.8 C409.5 466.3 406.8 465.4 404.9 465.1 C403.0 464.8 401.6 464.9 401.0 464.9 M401.0 464.9 C401.6 465.9 403.4 469.0 404.9 471.1 C406.4 473.2 408.3 475.1 409.9 477.4 C411.5 479.7 413.2 482.6 414.3 484.9 C415.4 487.2 416.1 489.2 416.5 491.1 C416.9 493.0 417.3 494.8 416.8 496.1 C416.3 497.5 415.1 498.6 413.7 499.2 C412.3 499.8 410.6 500.0 408.7 499.6 C406.8 499.2 404.7 498.2 402.4 496.7 C400.1 495.2 397.3 492.7 395.0 490.5 C392.7 488.3 390.5 485.5 388.7 483.6 C386.9 481.7 385.0 479.7 384.3 478.9 M384.3 478.9 C384.1 479.9 383.9 482.4 383.4 485.0 C382.9 487.6 382.2 491.3 381.4 494.5 C380.6 497.7 379.6 500.8 378.6 504.0 C377.6 507.2 376.7 510.3 375.2 513.5 C373.7 516.7 371.8 520.1 369.8 523.1 C367.8 526.1 365.5 528.7 363.0 531.2 C360.5 533.7 357.8 536.0 354.8 538.0 C351.9 540.0 348.5 542.0 345.3 543.5 C342.1 545.0 339.0 546.2 335.8 546.9 C332.6 547.6 329.9 547.7 326.3 547.8 C322.7 547.9 318.8 547.4 314.0 547.3 C309.2 547.2 304.2 547.1 297.3 547.0 C290.4 546.9 280.4 547.0 272.9 546.9 C265.4 546.8 259.2 546.6 252.4 546.1 C245.6 545.6 238.8 545.1 232.0 544.1 C225.2 543.1 218.4 541.7 211.6 540.0 C204.8 538.3 198.0 536.2 191.2 533.7 C184.4 531.2 177.6 528.5 170.8 524.7 C164.0 520.9 155.8 515.0 150.4 510.8 C145.0 506.6 141.7 503.2 138.2 499.6 C134.7 496.1 132.2 493.1 129.5 489.5 C126.8 485.9 124.1 482.2 121.9 478.1 C119.7 474.0 117.8 469.2 116.2 464.8 C114.6 460.4 113.3 455.5 112.4 451.4 C111.5 447.3 111.2 443.8 110.9 440.0 C110.6 436.2 110.3 432.4 110.3 428.6 C110.3 424.8 110.4 420.9 110.9 417.1 C111.4 413.3 112.1 409.8 113.3 405.7 C114.5 401.6 116.2 396.8 118.1 392.4 C120.0 387.9 122.1 383.1 124.8 379.0 C127.5 374.9 131.1 371.3 134.3 367.6 C137.6 363.9 139.9 360.5 144.3 356.8 C148.7 353.1 154.5 348.8 160.6 345.2 C166.7 341.6 174.5 337.8 181.0 335.4 C187.5 333.0 193.6 332.0 199.4 330.9 C205.2 329.8 210.6 329.3 215.7 328.9 C220.8 328.5 225.2 328.3 230.0 328.3 C234.8 328.3 239.2 328.3 244.3 328.7 C249.4 329.1 255.2 329.8 260.6 330.9 C266.0 331.9 271.4 333.4 276.9 335.0 C282.3 336.6 287.9 338.3 293.3 340.5 C298.8 342.7 305.5 345.9 309.6 348.1 C313.7 350.3 313.7 350.7 318.1 353.6 C322.6 356.5 331.2 361.8 336.3 365.4 C341.4 369.0 345.1 371.8 349.0 375.4 C352.9 379.0 356.6 383.3 359.9 387.2 C363.2 391.1 366.5 395.8 368.9 399.0 C371.3 402.2 373.0 404.4 374.4 406.2 C375.8 407.9 376.8 408.9 377.3 409.5" fill="none" stroke="#ff0000" stroke-width="2.3" stroke-linejoin="round" stroke-linecap="round"/>
<path d="M379.6 444.0 C379.4 443.6 379.1 442.1 378.1 441.9 C377.1 441.7 375.0 442.4 373.5 443.0 C372.0 443.6 370.1 444.5 368.9 445.5 C367.7 446.5 366.9 448.1 366.3 449.1 C365.7 450.2 365.3 450.8 365.5 451.8 C365.7 452.8 366.3 454.3 367.3 455.2 C368.3 456.1 370.0 456.5 371.4 457.2 C372.8 457.9 374.5 458.6 375.5 459.3 C376.5 460.0 377.2 461.0 377.6 461.3 M377.6 461.3 C377.9 461.0 378.8 460.1 379.1 459.3 C379.4 458.5 379.5 457.1 379.6 456.7 M379.6 456.7 C379.9 457.2 380.3 458.2 381.2 459.5 C382.1 460.8 383.5 462.8 385.0 464.5 C386.5 466.2 388.1 468.1 390.0 469.5 C391.9 470.9 393.9 472.0 396.2 472.8 C398.5 473.6 401.2 474.2 403.7 474.2 C406.2 474.2 409.0 473.8 411.2 473.0 C413.4 472.2 415.3 470.9 416.6 469.3 C417.9 467.8 418.5 465.5 418.9 463.7 C419.2 461.9 419.4 460.6 418.7 458.7 C418.0 456.8 416.6 454.4 414.9 452.4 C413.2 450.4 411.0 448.5 408.7 446.8 C406.4 445.1 403.6 443.4 401.2 442.4 C398.8 441.4 396.6 440.7 394.3 440.6 C392.0 440.5 389.5 441.2 387.5 441.8 C385.5 442.4 383.8 443.9 382.5 444.3 C381.2 444.7 380.1 444.1 379.6 444.0" fill="none" stroke="#2a2aa0" stroke-width="1.25" stroke-linejoin="round" stroke-linecap="round"/>
<path d="M377.3 409.5 C377.7 409.7 378.8 410.9 379.8 410.9 C380.8 410.9 381.9 410.6 383.4 409.6 C384.9 408.6 386.5 406.8 388.9 404.9 C391.3 403.0 394.7 400.1 398.0 398.0 C401.3 395.9 405.2 393.7 408.8 392.2 C412.4 390.7 416.4 389.7 419.7 389.0 C423.0 388.3 426.1 387.8 428.8 387.9 C431.5 387.9 433.7 388.4 436.1 389.3 C438.5 390.2 441.4 391.5 443.2 393.3 C445.0 395.1 446.2 397.6 446.9 399.9 C447.6 402.2 447.4 404.4 447.3 407.1 C447.2 409.8 446.4 413.5 446.0 416.2 C445.6 418.9 444.6 421.1 445.1 423.4 C445.6 425.7 446.6 427.9 448.8 429.8 C451.1 431.7 455.5 433.2 458.6 435.0 C461.7 436.8 464.9 438.7 467.3 440.6 C469.7 442.5 471.5 444.2 472.9 446.2 C474.2 448.2 475.2 450.3 475.4 452.4 C475.6 454.5 475.1 456.7 474.2 458.7 C473.3 460.7 471.8 462.6 469.8 464.3 C467.8 466.0 465.4 467.4 462.3 468.6 C459.2 469.9 454.8 471.0 451.1 471.8 C447.4 472.6 443.4 473.2 439.9 473.6 C436.4 474.1 432.7 474.1 429.9 474.5 C427.1 474.9 424.7 475.3 423.0 475.9 C421.3 476.5 420.2 477.1 419.9 478.2 C419.5 479.3 420.4 480.5 420.9 482.4 C421.4 484.3 422.6 487.5 423.0 489.8 C423.4 492.1 423.4 494.2 423.0 496.1 C422.6 498.0 421.6 500.0 420.5 501.1 C419.4 502.2 417.8 502.6 416.2 502.9 C414.6 503.1 412.5 503.1 410.6 502.6 C408.7 502.1 406.7 500.9 404.9 499.8 C403.1 498.7 401.6 497.7 400.0 496.1 C398.4 494.6 396.9 492.6 395.0 490.5 C393.1 488.4 390.5 485.5 388.7 483.6 C386.9 481.7 385.0 479.7 384.3 478.9 M384.3 478.9 C384.1 479.9 383.9 482.4 383.4 485.0 C382.9 487.6 382.2 491.3 381.4 494.5 C380.6 497.7 379.6 500.8 378.6 504.0 C377.6 507.2 376.7 510.3 375.2 513.5 C373.7 516.7 371.8 520.1 369.8 523.1 C367.8 526.1 365.5 528.7 363.0 531.2 C360.5 533.7 357.8 536.0 354.8 538.0 C351.9 540.0 348.5 542.0 345.3 543.5 C342.1 545.0 339.0 546.2 335.8 546.9 C332.6 547.6 329.9 547.7 326.3 547.8 C322.7 547.9 318.8 547.4 314.0 547.3 C309.2 547.2 304.2 547.1 297.3 547.0 C290.4 546.9 280.4 547.0 272.9 546.9 C265.4 546.8 259.2 546.6 252.4 546.1 C245.6 545.6 238.8 545.1 232.0 544.1 C225.2 543.1 218.4 541.7 211.6 540.0 C204.8 538.3 198.0 536.2 191.2 533.7 C184.4 531.2 177.6 528.5 170.8 524.7 C164.0 520.9 155.8 515.0 150.4 510.8 C145.0 506.6 141.7 503.2 138.2 499.6 C134.7 496.1 132.2 493.1 129.5 489.5 C126.8 485.9 124.1 482.2 121.9 478.1 C119.7 474.0 117.8 469.2 116.2 464.8 C114.6 460.4 113.3 455.5 112.4 451.4 C111.5 447.3 111.2 443.8 110.9 440.0 C110.6 436.2 110.3 432.4 110.3 428.6 C110.3 424.8 110.4 420.9 110.9 417.1 C111.4 413.3 112.1 409.8 113.3 405.7 C114.5 401.6 116.2 396.8 118.1 392.4 C120.0 387.9 122.1 383.1 124.8 379.0 C127.5 374.9 131.1 371.3 134.3 367.6 C137.6 363.9 139.9 360.5 144.3 356.8 C148.7 353.1 154.5 348.8 160.6 345.2 C166.7 341.6 174.5 337.8 181.0 335.4 C187.5 333.0 193.6 332.0 199.4 330.9 C205.2 329.8 210.6 329.3 215.7 328.9 C220.8 328.5 225.2 328.3 230.0 328.3 C234.8 328.3 239.2 328.3 244.3 328.7 C249.4 329.1 255.2 329.8 260.6 330.9 C266.0 331.9 271.4 333.4 276.9 335.0 C282.3 336.6 287.9 338.3 293.3 340.5 C298.8 342.7 305.5 345.9 309.6 348.1 C313.7 350.3 313.7 350.7 318.1 353.6 C322.6 356.5 331.2 361.8 336.3 365.4 C341.4 369.0 345.1 371.8 349.0 375.4 C352.9 379.0 356.6 383.3 359.9 387.2 C363.2 391.1 366.5 395.8 368.9 399.0 C371.3 402.2 373.0 404.4 374.4 406.2 C375.8 407.9 376.8 408.9 377.3 409.5" fill="none" stroke="#0a7a0a" stroke-width="1.0" stroke-linejoin="round" stroke-linecap="round"/>
<rect x="378" y="180" width="2" height="273" fill="#000" class="ce"/>
<rect x="107" y="451" width="273" height="2" fill="#000" class="ce"/>
<rect x="378" y="453" width="2" height="271" fill="#6a6a6a" class="ce"/>
<rect x="380" y="451" width="271" height="2" fill="#6a6a6a" class="ce"/>
<rect x="429.5" y="453" width="1.6" height="4.5" fill="#46a8a8" />
<rect x="484.5" y="453" width="1.6" height="4.5" fill="#46a8a8" />
<rect x="539.5" y="453" width="1.6" height="4.5" fill="#46a8a8" />
<rect x="594.5" y="453" width="1.6" height="4.5" fill="#46a8a8" />
<text x="430" y="473" font-size="13.33" fill="#000" text-anchor="middle" font-weight="normal" >0.2</text>
<text x="485" y="473" font-size="13.33" fill="#000" text-anchor="middle" font-weight="normal" >0.4</text>
<text x="540" y="473" font-size="13.33" fill="#000" text-anchor="middle" font-weight="normal" >0.6</text>
<text x="595" y="473" font-size="13.33" fill="#000" text-anchor="middle" font-weight="normal" >0.8</text>
<text x="376.6" y="154.5" font-size="16" fill="#000" text-anchor="middle" font-weight="normal" textLength="213.6" lengthAdjust="spacing" >fdtd_pattern_pattern_polar_yz</text>
<text x="659.5" y="456.1" font-size="10.67" fill="#000" text-anchor="start" font-weight="normal" >0°</text>
<text x="655.2" y="401.8" font-size="10.67" fill="#000" text-anchor="start" font-weight="normal" >10°</text>
<text x="642.6" y="354.6" font-size="10.67" fill="#000" text-anchor="start" font-weight="normal" >20°</text>
<text x="622.0" y="310.4" font-size="10.67" fill="#000" text-anchor="start" font-weight="normal" >30°</text>
<text x="594.0" y="270.4" font-size="10.67" fill="#000" text-anchor="start" font-weight="normal" >40°</text>
<text x="559.5" y="235.9" font-size="10.67" fill="#000" text-anchor="start" font-weight="normal" >50°</text>
<text x="519.5" y="207.9" font-size="10.67" fill="#000" text-anchor="start" font-weight="normal" >60°</text>
<text x="475.3" y="187.3" font-size="10.67" fill="#000" text-anchor="start" font-weight="normal" >70°</text>
<text x="428.1" y="174.7" font-size="10.67" fill="#000" text-anchor="start" font-weight="normal" >80°</text>
<text x="378.5" y="170.4" font-size="10.67" fill="#000" text-anchor="middle" font-weight="normal" >90°</text>
<text x="328.1" y="174.7" font-size="10.67" fill="#000" text-anchor="end" font-weight="normal" >100°</text>
<text x="280.9" y="187.3" font-size="10.67" fill="#000" text-anchor="end" font-weight="normal" >110°</text>
<text x="236.7" y="207.9" font-size="10.67" fill="#000" text-anchor="end" font-weight="normal" >120°</text>
<text x="196.7" y="235.9" font-size="10.67" fill="#000" text-anchor="end" font-weight="normal" >130°</text>
<text x="162.2" y="270.4" font-size="10.67" fill="#000" text-anchor="end" font-weight="normal" >140°</text>
<text x="134.2" y="310.4" font-size="10.67" fill="#000" text-anchor="end" font-weight="normal" >150°</text>
<text x="113.6" y="354.6" font-size="10.67" fill="#000" text-anchor="end" font-weight="normal" >160°</text>
<text x="101.0" y="401.8" font-size="10.67" fill="#000" text-anchor="end" font-weight="normal" >170°</text>
<text x="96.7" y="456.1" font-size="10.67" fill="#000" text-anchor="end" font-weight="normal" >180°</text>
<text x="99.9" y="510.7" font-size="10.67" fill="#000" text-anchor="end" font-weight="normal" >190°</text>
<text x="112.5" y="557.9" font-size="10.67" fill="#000" text-anchor="end" font-weight="normal" >200°</text>
<text x="133.1" y="602.1" font-size="10.67" fill="#000" text-anchor="end" font-weight="normal" >210°</text>
<text x="161.1" y="642.1" font-size="10.67" fill="#000" text-anchor="end" font-weight="normal" >220°</text>
<text x="195.6" y="676.6" font-size="10.67" fill="#000" text-anchor="end" font-weight="normal" >230°</text>
<text x="235.6" y="704.6" font-size="10.67" fill="#000" text-anchor="end" font-weight="normal" >240°</text>
<text x="279.8" y="725.2" font-size="10.67" fill="#000" text-anchor="end" font-weight="normal" >250°</text>
<text x="327.0" y="737.8" font-size="10.67" fill="#000" text-anchor="end" font-weight="normal" >260°</text>
<text x="378.5" y="742.1" font-size="10.67" fill="#000" text-anchor="middle" font-weight="normal" >270°</text>
<text x="427.5" y="737.8" font-size="10.67" fill="#000" text-anchor="start" font-weight="normal" >280°</text>
<text x="474.7" y="725.2" font-size="10.67" fill="#000" text-anchor="start" font-weight="normal" >290°</text>
<text x="518.9" y="704.6" font-size="10.67" fill="#000" text-anchor="start" font-weight="normal" >300°</text>
<text x="558.9" y="676.6" font-size="10.67" fill="#000" text-anchor="start" font-weight="normal" >310°</text>
<text x="593.4" y="642.1" font-size="10.67" fill="#000" text-anchor="start" font-weight="normal" >320°</text>
<text x="621.4" y="602.1" font-size="10.67" fill="#000" text-anchor="start" font-weight="normal" >330°</text>
<text x="642.0" y="557.9" font-size="10.67" fill="#000" text-anchor="start" font-weight="normal" >340°</text>
<text x="654.6" y="510.7" font-size="10.67" fill="#000" text-anchor="start" font-weight="normal" >350°</text>
<rect x="721.5" y="202.5" width="119" height="57" fill="#6a6a6a" opacity="0.75" filter="url(#blur1)"/>
<rect x="718.75" y="199.75" width="118.5" height="56.5" fill="#fff" stroke="#505050" stroke-width="1.5"/>
<rect x="723" y="205" width="12" height="12" fill="#fff" class="ce"/>
<rect x="723" y="205" width="12" height="1" fill="#909090" />
<rect x="723" y="205" width="1" height="12" fill="#909090" />
<rect x="724" y="206" width="10" height="1" fill="#505050" />
<rect x="724" y="206" width="1" height="10" fill="#505050" />
<rect x="724" y="216" width="11" height="1" fill="#e8e8e8" />
<rect x="734" y="206" width="1" height="11" fill="#e8e8e8" />
<path d="M725.800 210.2 L728.500 212.7 L732.700 208.2 V211.2 L728.500 215.6 L725.800 213 Z" fill="#000"/>
<line x1="739.5" y1="211" x2="757.5" y2="211" stroke="#ff0000" stroke-width="2.2"/>
<text x="763.7" y="214.7" font-size="11" fill="#ff0000" text-anchor="start" font-weight="normal" textLength="63.5" lengthAdjust="spacing" >mag_e_theta</text>
<rect x="723" y="222" width="12" height="12" fill="#fff" class="ce"/>
<rect x="723" y="222" width="12" height="1" fill="#909090" />
<rect x="723" y="222" width="1" height="12" fill="#909090" />
<rect x="724" y="223" width="10" height="1" fill="#505050" />
<rect x="724" y="223" width="1" height="10" fill="#505050" />
<rect x="724" y="233" width="11" height="1" fill="#e8e8e8" />
<rect x="734" y="223" width="1" height="11" fill="#e8e8e8" />
<path d="M725.800 227.2 L728.500 229.7 L732.700 225.2 V228.2 L728.500 232.6 L725.800 230 Z" fill="#000"/>
<line x1="739.5" y1="228" x2="757.5" y2="228" stroke="#6a6ac4" stroke-width="1.6"/>
<text x="763.7" y="231.7" font-size="11" fill="#000090" text-anchor="start" font-weight="normal" textLength="55.5" lengthAdjust="spacing" >mag_e_phi</text>
<rect x="723" y="239" width="12" height="12" fill="#fff" class="ce"/>
<rect x="723" y="239" width="12" height="1" fill="#909090" />
<rect x="723" y="239" width="1" height="12" fill="#909090" />
<rect x="724" y="240" width="10" height="1" fill="#505050" />
<rect x="724" y="240" width="1" height="10" fill="#505050" />
<rect x="724" y="250" width="11" height="1" fill="#e8e8e8" />
<rect x="734" y="240" width="1" height="11" fill="#e8e8e8" />
<path d="M725.800 244.2 L728.500 246.7 L732.700 242.2 V245.2 L728.500 249.6 L725.800 247 Z" fill="#000"/>
<line x1="739.5" y1="245" x2="757.5" y2="245" stroke="#5aac5a" stroke-width="1.6"/>
<text x="763.7" y="248.7" font-size="11" fill="#008000" text-anchor="start" font-weight="normal" textLength="60.5" lengthAdjust="spacing" >mag_e_total</text>
</svg></body></html>
